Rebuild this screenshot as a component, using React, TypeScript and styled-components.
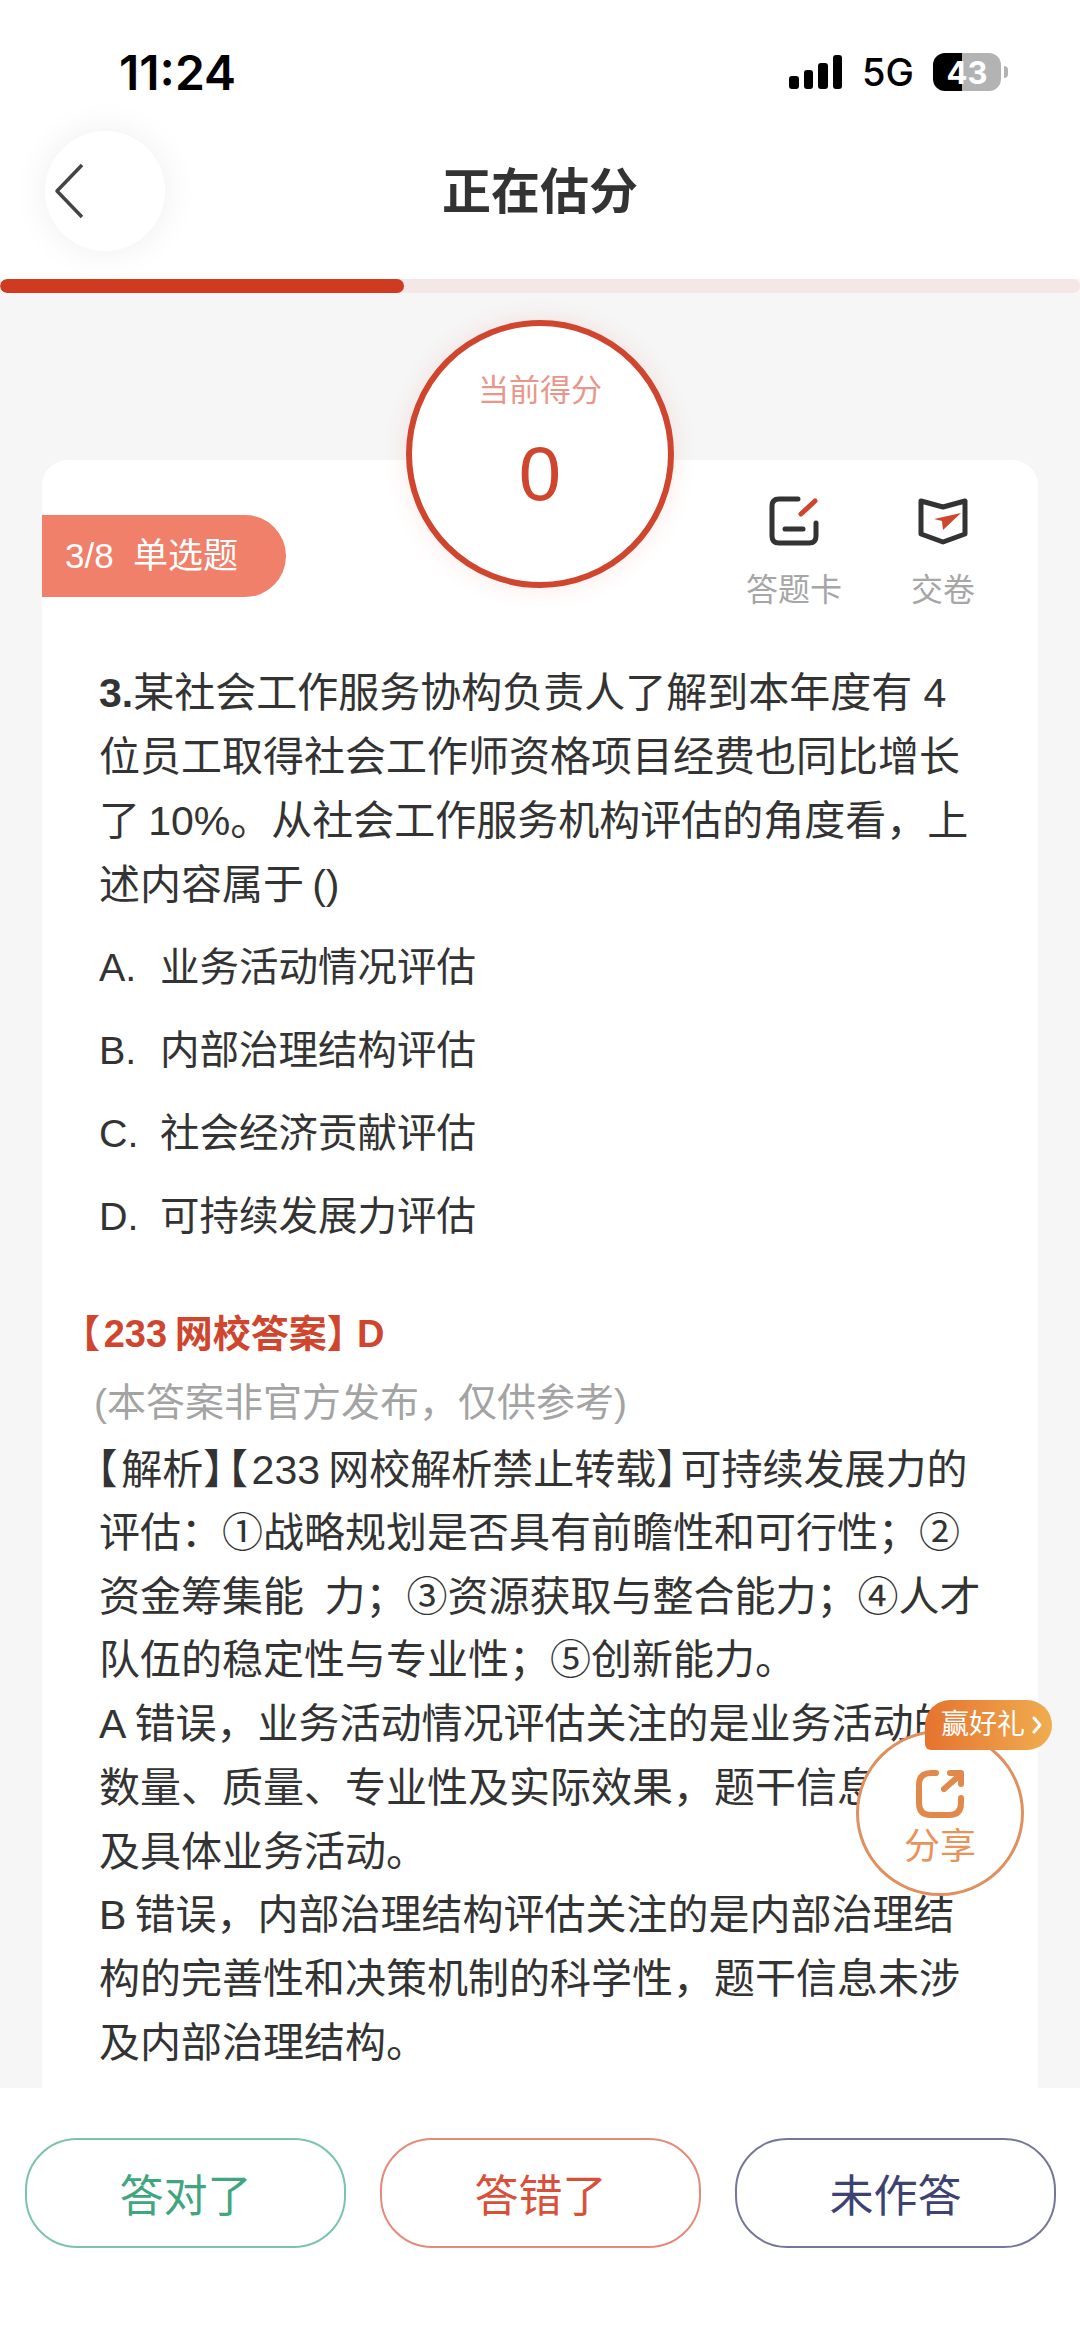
import React from "react";
import styled, { createGlobalStyle } from "styled-components";

const Global = createGlobalStyle`
  html, body { margin: 0; padding: 0; background: #fff; }
  * { box-sizing: border-box; }
`;

const Page = styled.div`
  position: relative;
  width: 1080px;
  height: 2337px;
  display: flex;
  flex-direction: column;
  overflow: hidden;
  background: #f6f6f6;
  font-family: "Liberation Sans", "Noto Sans CJK SC", sans-serif;
  color: #333;
`;
const StatusBar = styled.div`
  height: 130px;
  flex: none;
  background: #fff;
  display: flex;
  align-items: center;
  justify-content: space-between;
  padding: 14px 79px 0 119px;
  font-family: Inter, sans-serif;
`;
const Clock = styled.div`
  font-size: 48px;
  font-weight: 600;
  color: #000;
`;
const StatusRight = styled.div`
  display: flex;
  align-items: center;
`;
const Signal = styled.div`
  display: flex;
  align-items: flex-end;
  gap: 5px;
  height: 34px;
  margin-right: 20px;
`;
const SignalBar = styled.div<{ $h: number }>`
  width: 9.5px;
  height: ${(p) => p.$h}px;
  background: #000;
  border-radius: 3px;
`;
const Net = styled.div`
  font-size: 38px;
  font-weight: 500;
  color: #000;
  margin-right: 19px;
`;
const Battery = styled.div`
  position: relative;
  width: 68px;
  height: 38px;
  border-radius: 12px;
  background: linear-gradient(90deg, #000 43%, #b3b3b3 43%);
  color: #fff;
  font-size: 31px;
  font-weight: 700;
  display: flex;
  align-items: center;
  justify-content: center;
  &::after {
    content: "";
    position: absolute;
    right: -7px;
    top: 13px;
    width: 4px;
    height: 12px;
    border-radius: 0 4px 4px 0;
    background: #b3b3b3;
  }
`;
const Header = styled.div`
  height: 149px;
  flex: none;
  background: #fff;
  display: flex;
  align-items: flex-start;
  justify-content: center;
  position: relative;
`;
const BackButton = styled.div`
  position: absolute;
  left: 45px;
  top: 1px;
  width: 120px;
  height: 120px;
  border-radius: 50%;
  background: #fff;
  box-shadow: 0 0 36px rgba(0, 0, 0, 0.07);
  display: flex;
  align-items: center;
  padding-left: 8px;
`;
const Title = styled.div`
  font-size: 49px;
  font-weight: 700;
  line-height: 64px;
  margin-top: 30px;
  color: #333;
`;
const ProgressTrack = styled.div`
  height: 14px;
  flex: none;
  background: #f5e7e5;
  border-radius: 7px;
  overflow: hidden;
`;
const ProgressFill = styled.div`
  width: 404px;
  height: 100%;
  background: #d03a20;
  border-radius: 7px;
`;
const Content = styled.div`
  flex: 1;
  min-height: 0;
  overflow: hidden;
  padding: 167px 42px 0;
`;
const Card = styled.div`
  background: #fff;
  border-radius: 26px 26px 0 0;
  height: 100%;
  display: flex;
  flex-direction: column;
`;
const CardTop = styled.div`
  display: flex;
  justify-content: space-between;
  align-items: flex-start;
  padding-top: 36px;
  height: 201px;
  flex: none;
`;
const Badge = styled.div`
  margin-top: 19px;
  width: 244px;
  height: 82px;
  background: #f0806a;
  border-radius: 0 41px 41px 0;
  color: #fff;
  font-size: 35px;
  line-height: 82px;
  padding-left: 23px;
  white-space: pre;
`;
const Tools = styled.div`
  display: flex;
  gap: 53px;
  padding-right: 47px;
`;
const Tool = styled.div`
  display: flex;
  flex-direction: column;
  align-items: center;
  width: 96px;
`;
const ToolLabel = styled.div`
  margin-top: 22px;
  font-size: 32px;
  line-height: 44px;
  color: #a6a6a6;
  white-space: nowrap;
`;
const Body = styled.div`
  padding: 0 0 0 57px;
`;
const Line = styled.div`
  font-size: 41px;
  line-height: 64px;
  color: #333;
  white-space: pre;
`;
const LeadLine = styled(Line)`
  margin-top: 1px;
  margin-left: -2px;
`;
const AnalysisLine = styled(Line)`
  line-height: 63.7px;
`;
const QNum = styled.span`
  font-weight: 700;
`;
const Bracket = styled.span`
  font-feature-settings: "halt";
  letter-spacing: 3.7px;
`;
const Options = styled.div`
  margin-top: 18px;
  display: flex;
  flex-direction: column;
  gap: 19px;
`;
const Option = styled.div`
  display: flex;
  font-size: 39.5px;
  line-height: 64px;
  color: #333;
`;
const OptionKey = styled.span`
  width: 61px;
  flex: none;
`;
const Analysis = styled.div`
  margin-top: 54px;
`;
const AnswerHead = styled.div`
  margin-left: -18px;
  font-size: 38px;
  line-height: 64px;
  font-weight: 700;
  color: #d0452d;
  white-space: pre;
`;
const Note = styled.div`
  margin-top: 3px;
  margin-left: -5px;
  font-size: 39px;
  line-height: 68px;
  color: #a3a3a3;
`;
const Circle = styled.div`
  position: absolute;
  left: 406px;
  top: 320px;
  width: 268px;
  height: 268px;
  border-radius: 50%;
  border: 6px solid #d0452d;
  background: #fff;
  box-shadow: 0 0 24px rgba(208, 69, 45, 0.12);
  display: flex;
  flex-direction: column;
  align-items: center;
`;
const CircleLabel = styled.div`
  margin-top: 43px;
  font-size: 31px;
  line-height: 44px;
  color: #e9968a;
`;
const CircleScore = styled.div`
  margin-top: 16px;
  font-size: 76px;
  line-height: 90px;
  color: #d0452d;
`;
const Share = styled.div`
  position: absolute;
  left: 856px;
  top: 1730px;
  width: 168px;
  height: 166px;
  border-radius: 50%;
  border: 3px solid #e08f5f;
  background: #fff;
  display: flex;
  flex-direction: column;
  align-items: center;
  padding-top: 37px;
`;
const ShareLabel = styled.div`
  font-size: 36px;
  line-height: 44px;
  margin-top: 7px;
  color: #e8935a;
`;
const Gift = styled.div`
  position: absolute;
  left: 925px;
  top: 1700px;
  width: 127px;
  height: 50px;
  border-radius: 25px 25px 25px 6px;
  background: linear-gradient(90deg, #e5732f, #f0ad4f);
  color: #fff;
  font-size: 28px;
  line-height: 50px;
  padding-left: 16px;
  white-space: pre;
  display: flex;
  align-items: center;
  gap: 7px;
`;
const Footer = styled.div`
  height: 249px;
  flex: none;
  background: #fff;
  display: flex;
  gap: 34px;
  padding: 50px 25px 0;
`;
const Choice = styled.div<{ $c: string; $b: string }>`
  flex: none;
  width: 321px;
  height: 110px;
  border: 2px solid ${(p) => p.$b};
  border-radius: 52px;
  color: ${(p) => p.$c};
  font-size: 44px;
  display: flex;
  align-items: center;
  justify-content: center;
  background: #fff;
`;

const question = [
  "位员工取得社会工作师资格项目经费也同比增长",
  "了\u200910%。从社会工作服务机构评估的角度看，上",
  "述内容属于\u2009()",
];
const options: [string, string][] = [
  ["A.", "业务活动情况评估"],
  ["B.", "内部治理结构评估"],
  ["C.", "社会经济贡献评估"],
  ["D.", "可持续发展力评估"],
];
const analysis = [
  "评估：①战略规划是否具有前瞻性和可行性；②",
  "资金筹集能\u2002力；③资源获取与整合能力；④人才",
  "队伍的稳定性与专业性；⑤创新能力。",
  "A\u2009错误，业务活动情况评估关注的是业务活动的",
  "数量、质量、专业性及实际效果，题干信息未涉",
  "及具体业务活动。",
  "B\u2009错误，内部治理结构评估关注的是内部治理结",
  "构的完善性和决策机制的科学性，题干信息未涉",
  "及内部治理结构。",
];

export default function App() {
  return (
    <Page>
      <Global />
      <StatusBar>
        <Clock>11:24</Clock>
        <StatusRight>
          <Signal>
            {[13, 19, 26, 34].map((h) => (
              <SignalBar key={h} $h={h} />
            ))}
          </Signal>
          <Net>5G</Net>
          <Battery>43</Battery>
        </StatusRight>
      </StatusBar>
      <Header>
        <BackButton>
          <svg width="32" height="56" viewBox="0 0 32 56" fill="none">
            <path d="M29 2 L4 28 L29 54" stroke="#444" strokeWidth="3.5" strokeLinejoin="round" />
          </svg>
        </BackButton>
        <Title>正在估分</Title>
      </Header>
      <ProgressTrack>
        <ProgressFill />
      </ProgressTrack>
      <Content>
        <Card>
          <CardTop>
            <Badge>3/8  单选题</Badge>
            <Tools>
              <Tool>
                <svg width="50" height="50" viewBox="0 0 50 50" fill="none" strokeLinecap="round">
                  <path d="M29 3 H10 Q3 3 3 10 V40 Q3 47 10 47 H40 Q47 47 47 40 V27" stroke="#333" strokeWidth="5" />
                  <path d="M16 33 H34" stroke="#333" strokeWidth="5" />
                  <path d="M32 18 L46 5" stroke="#d0452d" strokeWidth="5" />
                </svg>
                <ToolLabel>答题卡</ToolLabel>
              </Tool>
              <Tool>
                <svg width="50" height="50" viewBox="0 0 50 50" fill="none">
                  <path d="M3 5 L25 11 L47 5 V38 L25 46 L3 38 Z" stroke="#333" strokeWidth="5" strokeLinejoin="round" />
                  <path d="M43 17 L16 23 L24 25 L25 34 Z" fill="#d0452d" />
                </svg>
                <ToolLabel>交卷</ToolLabel>
              </Tool>
            </Tools>
          </CardTop>
          <Body>
            <Line>
              <QNum>3.</QNum>某社会工作服务协构负责人了解到本年度有 4
            </Line>
            {question.map((t) => (
              <Line key={t}>{t}</Line>
            ))}
            <Options>
              {options.map(([k, t]) => (
                <Option key={k}>
                  <OptionKey>{k}</OptionKey>
                  {t}
                </Option>
              ))}
            </Options>
            <Analysis>
              <AnswerHead>
                <Bracket>【</Bracket>233{"\u2009"}网校答案<Bracket>】</Bracket>
                {"\u2009"}D
              </AnswerHead>
              <Note>(本答案非官方发布，仅供参考)</Note>
              <LeadLine>
                <Bracket>【</Bracket>解析<Bracket>】【</Bracket>233{"\u2009"}网校解析禁止转载<Bracket>】</Bracket>可持续发展力的
              </LeadLine>
              {analysis.map((t) => (
                <AnalysisLine key={t}>{t}</AnalysisLine>
              ))}
            </Analysis>
          </Body>
        </Card>
      </Content>
      <Footer>
        <Choice $c="#3fa67f" $b="#7cc4a8">答对了</Choice>
        <Choice $c="#d9503a" $b="#e58a7a">答错了</Choice>
        <Choice $c="#3d4270" $b="#74779a">未作答</Choice>
      </Footer>
      <Circle>
        <CircleLabel>当前得分</CircleLabel>
        <CircleScore>0</CircleScore>
      </Circle>
      <Share>
        <svg width="48" height="48" viewBox="0 0 48 48" fill="none" stroke="#e0894a" strokeWidth="6" strokeLinecap="round" strokeLinejoin="round">
          <path d="M20 3 H15 Q3 3 3 15 V33 Q3 45 15 45 H33 Q45 45 45 33 V28" />
          <path d="M28 19 L44 5" />
          <path d="M34 3 H45 V14" />
        </svg>
        <ShareLabel>分享</ShareLabel>
      </Share>
      <Gift>
        赢好礼
        <svg width="10" height="18" viewBox="0 0 10 18" fill="none">
          <path d="M2 2 L8 9 L2 16" stroke="#fff" strokeWidth="3" strokeLinecap="round" strokeLinejoin="round" />
        </svg>
      </Gift>
    </Page>
  );
}
